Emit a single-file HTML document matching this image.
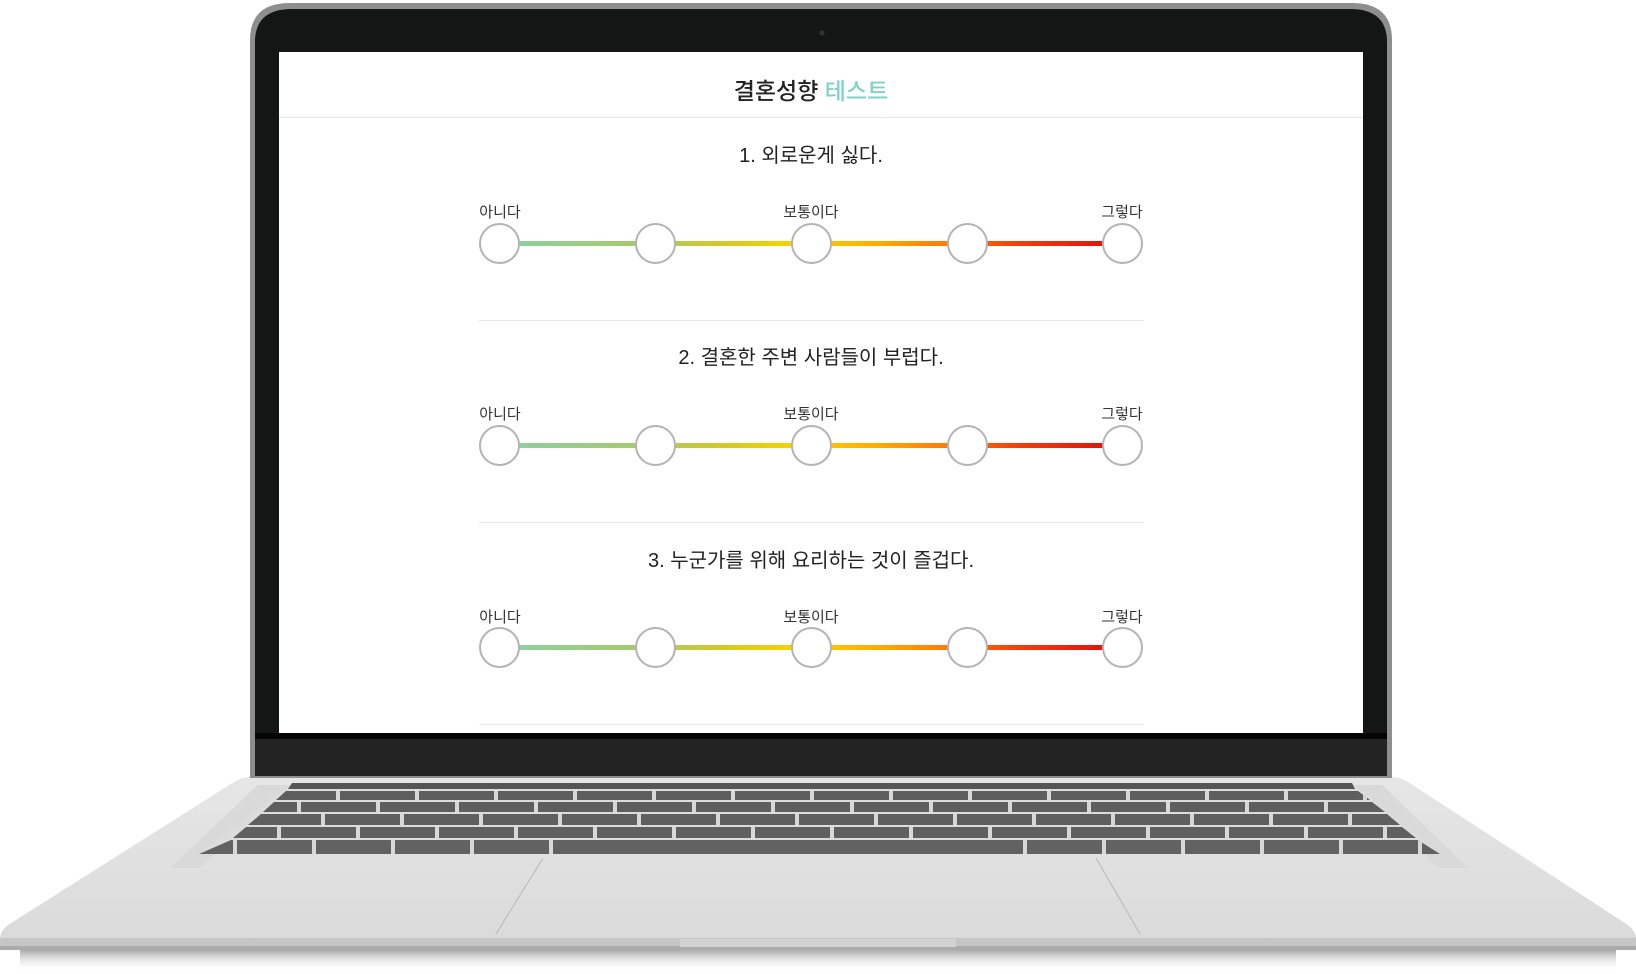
<!DOCTYPE html>
<html><head><meta charset="utf-8">
<style>
html,body{margin:0;padding:0;background:#fff;}
body{width:1636px;height:974px;position:relative;overflow:hidden;font-family:"Liberation Sans","Noto Sans CJK KR",sans-serif;}
svg{position:absolute;left:0;top:0;}
.t{position:absolute;left:311px;width:1000px;text-align:center;color:#222;}
.lbl{position:absolute;font-size:15px;color:#333;transform:translateX(-50%);white-space:nowrap;}
.c{position:absolute;border:2px solid #b4b4b4;border-radius:50%;background:#fff;box-sizing:border-box;width:41px;height:41px;}
.bar{position:absolute;height:5px;}
.hr{position:absolute;left:479px;width:665px;height:1px;background:#e8e8e8;}
</style></head><body>
<svg width="1636" height="974" viewBox="0 0 1636 974">
<defs>
<linearGradient id="deck" x1="0" y1="0" x2="0" y2="1">
<stop offset="0" stop-color="#e6e6e6"/><stop offset="1" stop-color="#dadada"/></linearGradient>
<linearGradient id="sh" x1="0" y1="0" x2="0" y2="1">
<stop offset="0" stop-color="#9a9a9a"/><stop offset="1" stop-color="#fff" stop-opacity="0"/></linearGradient>
<pattern id="k1" x="20" y="0" width="79" height="100" patternUnits="userSpaceOnUse"><rect x="0" y="0" width="4" height="100" fill="#d8d8d8"/></pattern>
<pattern id="k2" x="60" y="0" width="79" height="100" patternUnits="userSpaceOnUse"><rect x="0" y="0" width="4" height="100" fill="#d8d8d8"/></pattern>
<pattern id="k3" x="5" y="0" width="79" height="100" patternUnits="userSpaceOnUse"><rect x="0" y="0" width="4" height="100" fill="#d8d8d8"/></pattern>
<pattern id="k4" x="40" y="0" width="79" height="100" patternUnits="userSpaceOnUse"><rect x="0" y="0" width="4" height="100" fill="#d8d8d8"/></pattern>
<pattern id="k5" x="75" y="0" width="79" height="100" patternUnits="userSpaceOnUse"><rect x="0" y="0" width="4" height="100" fill="#d8d8d8"/></pattern>
</defs>
<rect x="20" y="948" width="1596" height="24" fill="url(#sh)"/>
<path d="M250,777 L1392,777 Q1400,777 1408,782 L1628,925 Q1636,932 1636,938 L1636,946 L0,946 L0,938 Q0,932 8,925 L234,782 Q242,777 250,777 Z" fill="url(#deck)"/>
<rect x="0" y="938" width="1636" height="12" fill="#c6c6c6"/>
<rect x="0" y="946" width="1636" height="4" fill="#ababab"/>
<rect x="680" y="939" width="276" height="8" fill="#d2d2d2"/>
<path d="M258,785 L290,785 L200,868 L170,868 Z" fill="#d9d9d9"/>
<path d="M1352,785 L1382,785 L1468,868 L1438,868 Z" fill="#d9d9d9"/>
<!-- keyboard -->
<path d="M292,783 L1352,783 L1440,854 L199,854 Z" fill="#dcdcdc"/>
<path d="M292,783 L1352,783 L1355,789 L288,789 Z" fill="#555"/>
<path d="M286,791 L1358,791 L1370,800 L276,800 Z" fill="#5e5e5e"/>
<path d="M286,791 L1358,791 L1370,800 L276,800 Z" fill="url(#k1)"/>
<path d="M274,802 L1372,802 L1385,812 L263,812 Z" fill="#5e5e5e"/>
<path d="M274,802 L1372,802 L1385,812 L263,812 Z" fill="url(#k2)"/>
<path d="M261,814 L1387,814 L1400,825 L248,825 Z" fill="#5f5f5f"/>
<path d="M261,814 L1387,814 L1400,825 L248,825 Z" fill="url(#k3)"/>
<path d="M246,827 L1402,827 L1416,838 L233,838 Z" fill="#606060"/>
<path d="M246,827 L1402,827 L1416,838 L233,838 Z" fill="url(#k4)"/>
<path d="M231,840 L1418,840 L1440,854 L199,854 Z" fill="#626262"/>
<path d="M231,840 L565,840 L565,854 L199,854 Z" fill="url(#k5)"/>
<path d="M985,840 L1418,840 L1440,854 L985,854 Z" fill="url(#k5)"/>
<line x1="543" y1="858" x2="496" y2="934" stroke="#b8b8b8" stroke-width="1"/>
<line x1="1096" y1="858" x2="1140" y2="934" stroke="#b8b8b8" stroke-width="1"/>
<!-- lid -->
<path d="M250,778 L250,40 Q250,3 290,3 L1352,3 Q1392,3 1392,40 L1392,778 Z" fill="#8e8e8e"/>
<path d="M255,776 L255,42 Q255,9 292,9 L1350,9 Q1387,9 1387,42 L1387,776 Z" fill="#141515"/>
<rect x="255" y="738" width="1132" height="38" fill="#232323"/>
<rect x="255" y="733" width="1132" height="6" fill="#050505"/>
<circle cx="822" cy="33" r="2.5" fill="#333"/>
<rect x="279" y="52" width="1084" height="681" fill="#fff"/>
<rect x="279" y="117" width="1084" height="1" fill="#e6e6e6"/>
</svg>

<div class="t" style="top:72px;font-size:23px;font-weight:500;">결혼성향 <span style="color:#7fd3c2">테스트</span></div>

<div class="t" style="top:139px;font-size:20px;">1. 외로운게 싫다.</div>
<div class="lbl" style="left:500px;top:201px">아니다</div>
<div class="lbl" style="left:811px;top:201px">보통이다</div>
<div class="lbl" style="left:1122px;top:201px">그렇다</div>
<div class="bar" style="left:515px;top:241px;width:600px;background:linear-gradient(90deg,#8dd0a0 0%,#a9c96a 22%,#d6c926 35%,#f8d200 47%,#ffae00 60%,#ff7a08 72%,#f23e0e 84%,#dc1010 100%)"></div>
<div class="c" style="left:479px;top:223px"></div><div class="c" style="left:635px;top:223px"></div><div class="c" style="left:791px;top:223px"></div><div class="c" style="left:947px;top:223px"></div><div class="c" style="left:1102px;top:223px"></div>
<div class="hr" style="top:320px"></div>

<div class="t" style="top:341px;font-size:20px;">2. 결혼한 주변 사람들이 부럽다.</div>
<div class="lbl" style="left:500px;top:403px">아니다</div>
<div class="lbl" style="left:811px;top:403px">보통이다</div>
<div class="lbl" style="left:1122px;top:403px">그렇다</div>
<div class="bar" style="left:515px;top:443px;width:600px;background:linear-gradient(90deg,#8dd0a0 0%,#a9c96a 22%,#d6c926 35%,#f8d200 47%,#ffae00 60%,#ff7a08 72%,#f23e0e 84%,#dc1010 100%)"></div>
<div class="c" style="left:479px;top:425px"></div><div class="c" style="left:635px;top:425px"></div><div class="c" style="left:791px;top:425px"></div><div class="c" style="left:947px;top:425px"></div><div class="c" style="left:1102px;top:425px"></div>
<div class="hr" style="top:522px"></div>

<div class="t" style="top:544px;font-size:20px;">3. 누군가를 위해 요리하는 것이 즐겁다.</div>
<div class="lbl" style="left:500px;top:606px">아니다</div>
<div class="lbl" style="left:811px;top:606px">보통이다</div>
<div class="lbl" style="left:1122px;top:606px">그렇다</div>
<div class="bar" style="left:515px;top:645px;width:600px;background:linear-gradient(90deg,#8dd0a0 0%,#a9c96a 22%,#d6c926 35%,#f8d200 47%,#ffae00 60%,#ff7a08 72%,#f23e0e 84%,#dc1010 100%)"></div>
<div class="c" style="left:479px;top:627px"></div><div class="c" style="left:635px;top:627px"></div><div class="c" style="left:791px;top:627px"></div><div class="c" style="left:947px;top:627px"></div><div class="c" style="left:1102px;top:627px"></div>
<div class="hr" style="top:724px"></div>
</body></html>
